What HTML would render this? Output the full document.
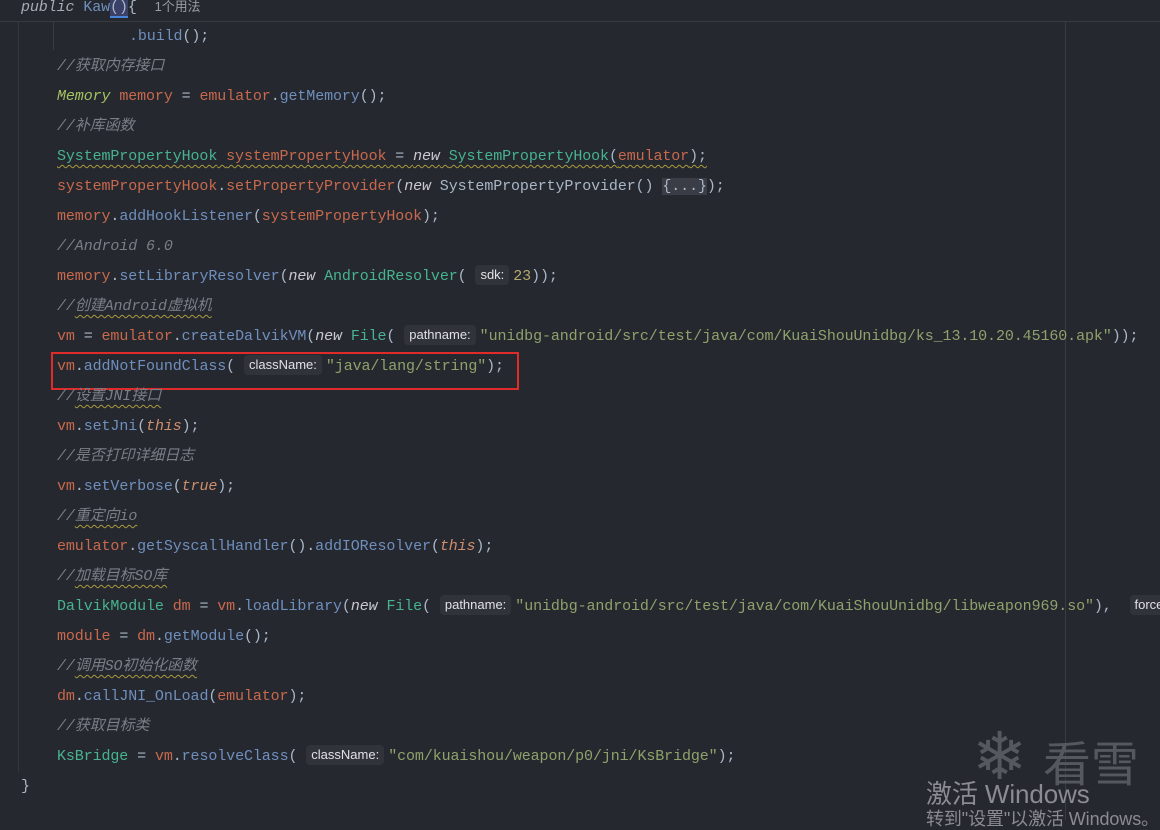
<!DOCTYPE html><html><head><meta charset="utf-8"><style>
body{margin:0;width:1160px;height:820px;background:#262830;overflow:hidden;position:relative;font-family:"Liberation Mono","Noto Sans CJK SC",monospace;font-size:15px;letter-spacing:-0.1px;color:#a9b7c6}
.l{position:absolute;left:57px;height:30px;line-height:30px;white-space:pre}
.v{color:#c8694c}.m{color:#6f8fbd}.c{color:#7a7e85;font-style:italic}.k{color:#c8cad0;font-style:italic}
.t{color:#47b38f}.g{color:#a5c261;font-style:italic}.s{color:#8fa26a}.n{color:#b3a86d}
.h{display:inline-block;background:#30333a;color:#dfe1e5;font-family:"Liberation Sans",sans-serif;font-size:13px;line-height:20px;padding:0 5px;border-radius:4px;margin:0 4px 0 0;vertical-align:1px;letter-spacing:0}
.w{text-decoration:underline wavy #a89a3c;text-decoration-thickness:1px;text-underline-offset:4px}
</style></head><body>
<div style="position:absolute;left:0;top:21px;width:1160px;height:1px;background:#393b42"></div>
<div style="position:absolute;left:18px;top:22px;width:1px;height:750px;background:#34363d"></div>
<div style="position:absolute;left:53px;top:22px;width:1px;height:28px;background:#3b3d44"></div>
<div style="position:absolute;left:1065px;top:22px;width:1px;height:798px;background:#3a3c44"></div>
<div class="l" style="left:21px;top:-8px"><span class="k" style="color:#a8abb3">public</span> <span style="color:#6f8fbd">Kaw</span><span style="background:#3b4068;border-bottom:2px solid #4a84d8">()</span>{  <span style="font-family:'Liberation Sans','Noto Sans CJK SC',sans-serif;font-size:13px;color:#9a9da4">1个用法</span></div>
<div class="l" style="left:129px;top:22px"><span class="m">.build</span>();</div>
<div class="l c" style="top:52px">//获取内存接口</div>
<div class="l" style="top:82px"><span class="g">Memory</span> <span class="v">memory</span> = <span class="v">emulator</span>.<span class="m">getMemory</span>();</div>
<div class="l c" style="top:112px">//补库函数</div>
<div class="l" style="top:142px"><span class="w"><span class="t">SystemPropertyHook</span> <span class="v">systemPropertyHook</span> = <span class="k">new</span> <span class="t">SystemPropertyHook</span>(<span class="v">emulator</span>);</span></div>
<div class="l" style="top:172px"><span class="v">systemPropertyHook</span>.<span class="v">setPropertyProvider</span>(<span class="k">new</span> SystemPropertyProvider() <span style="background:#3a3d46">{...}</span>);</div>
<div class="l" style="top:202px"><span class="v">memory</span>.<span class="m">addHookListener</span>(<span class="v">systemPropertyHook</span>);</div>
<div class="l c" style="top:232px">//Android 6.0</div>
<div class="l" style="top:262px"><span class="v">memory</span>.<span class="m">setLibraryResolver</span>(<span class="k">new</span> <span class="t">AndroidResolver</span>( <span class="h">sdk:</span><span class="n">23</span>));</div>
<div class="l c" style="top:292px">//<span class="w">创建Android虚拟机</span></div>
<div class="l" style="top:322px"><span class="v">vm</span> = <span class="v">emulator</span>.<span class="m">createDalvikVM</span>(<span class="k">new</span> <span class="t">File</span>( <span class="h">pathname:</span><span class="s">"unidbg-android/src/test/java/com/KuaiShouUnidbg/ks_13.10.20.45160.apk"</span>));</div>
<div class="l" style="top:352px"><span class="v">vm</span>.<span class="m">addNotFoundClass</span>( <span class="h">className:</span><span class="s">"java/lang/string"</span>);</div>
<div style="position:absolute;left:51px;top:352px;width:468px;height:38px;border:2px solid #e02b2b;box-sizing:border-box"></div>
<div class="l c" style="top:382px">//<span class="w">设置JNI接口</span></div>
<div class="l" style="top:412px"><span class="v">vm</span>.<span class="m">setJni</span>(<span class="k" style="color:#cf8e6d">this</span>);</div>
<div class="l c" style="top:442px">//是否打印详细日志</div>
<div class="l" style="top:472px"><span class="v">vm</span>.<span class="m">setVerbose</span>(<span class="k" style="color:#cf8e6d">true</span>);</div>
<div class="l c" style="top:502px">//<span class="w">重定向io</span></div>
<div class="l" style="top:532px"><span class="v">emulator</span>.<span class="m">getSyscallHandler</span>().<span class="m">addIOResolver</span>(<span class="k" style="color:#cf8e6d">this</span>);</div>
<div class="l c" style="top:562px">//<span class="w">加载目标SO库</span></div>
<div class="l" style="top:592px"><span class="t">DalvikModule</span> <span class="v">dm</span> = <span class="v">vm</span>.<span class="m">loadLibrary</span>(<span class="k">new</span> <span class="t">File</span>( <span class="h">pathname:</span><span class="s">"unidbg-android/src/test/java/com/KuaiShouUnidbg/libweapon969.so"</span>),  <span class="h">forceCallInit:</span></div>
<div class="l" style="top:622px"><span class="v">module</span> = <span class="v">dm</span>.<span class="m">getModule</span>();</div>
<div class="l c" style="top:652px">//<span class="w">调用SO初始化函数</span></div>
<div class="l" style="top:682px"><span class="v">dm</span>.<span class="m">callJNI_OnLoad</span>(<span class="v">emulator</span>);</div>
<div class="l c" style="top:712px">//获取目标类</div>
<div class="l" style="top:742px"><span class="t">KsBridge</span> = <span class="v">vm</span>.<span class="m">resolveClass</span>( <span class="h">className:</span><span class="s">"com/kuaishou/weapon/p0/jni/KsBridge"</span>);</div>
<div class="l" style="left:21px;top:772px">}</div>
<div style="position:absolute;left:972px;top:722px;font-size:66px;color:#55585f;font-family:'DejaVu Sans',sans-serif;line-height:70px">❄</div>
<div style="position:absolute;left:1043px;top:730px;font-size:48px;color:#55585f;font-family:'Noto Sans CJK SC',sans-serif;line-height:60px">看雪</div>
<div style="position:absolute;left:926px;top:778px;font-size:26px;color:#8a8c91;font-family:'Liberation Sans','Noto Sans CJK SC',sans-serif;line-height:32px;white-space:nowrap">激活 Windows</div>
<div style="position:absolute;left:926px;top:808px;font-size:18px;color:#8a8c91;font-family:'Liberation Sans','Noto Sans CJK SC',sans-serif;line-height:22px;white-space:nowrap">转到"设置"以激活 Windows。</div>
</body></html>
